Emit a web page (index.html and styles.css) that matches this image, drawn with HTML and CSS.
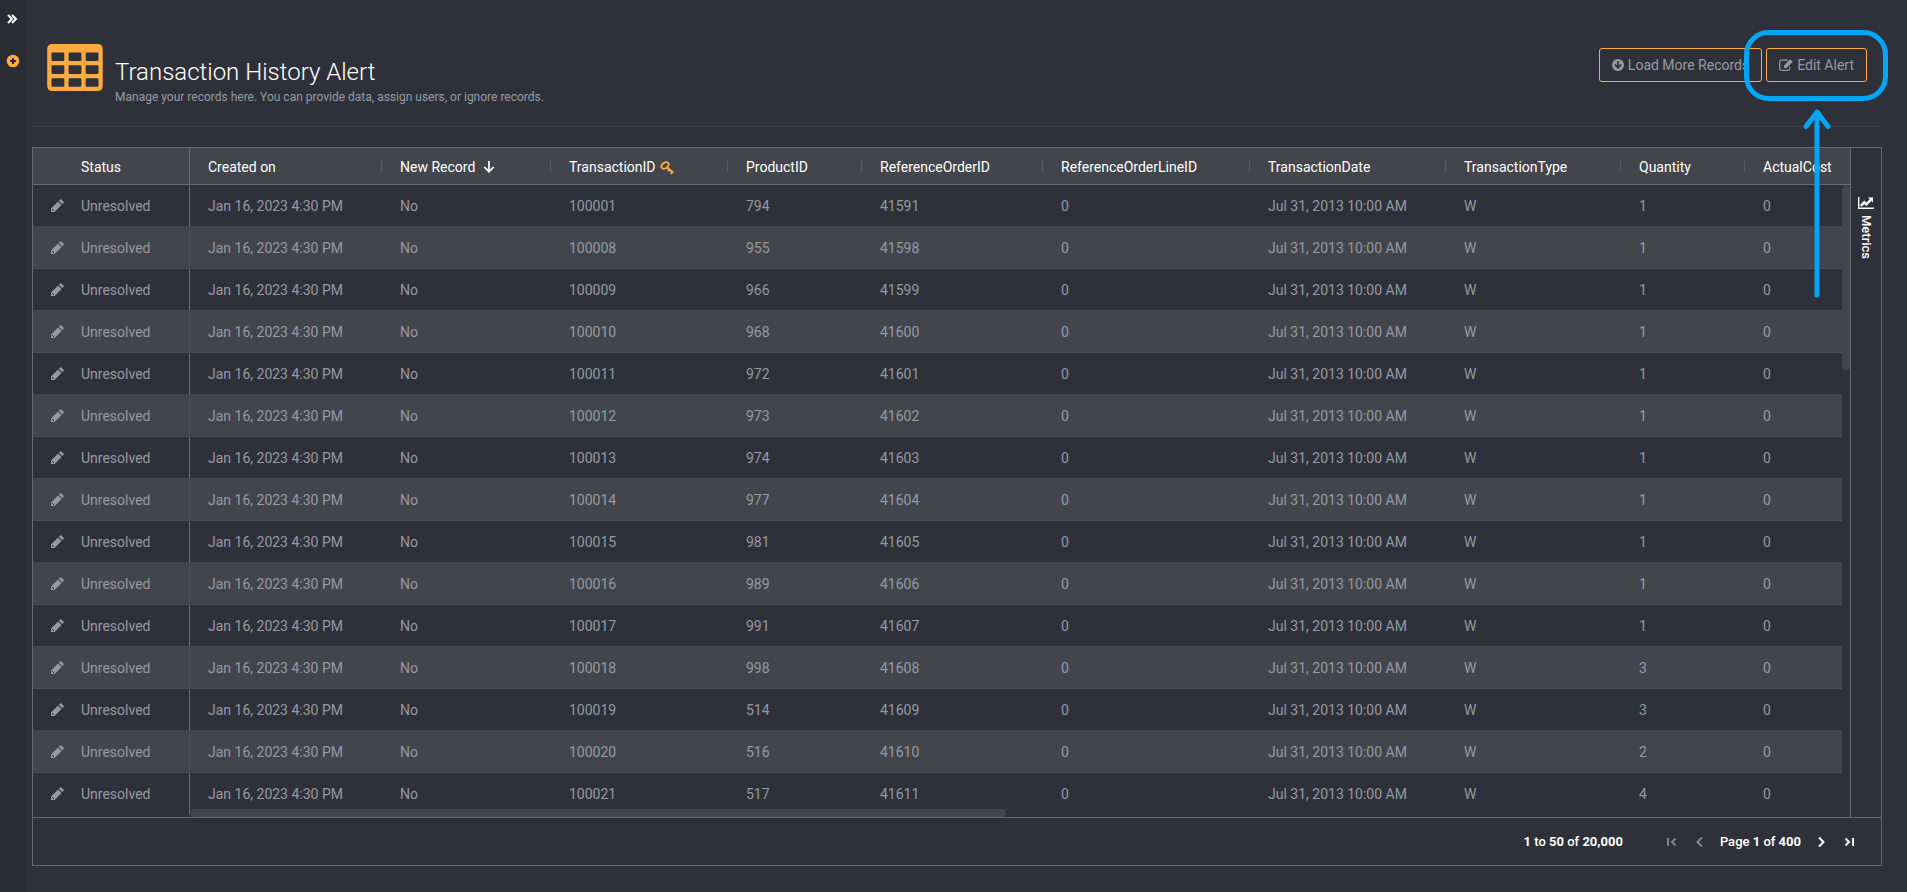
FILE: index.html
```
<!DOCTYPE html>
<html lang="en">
<head>
<meta charset="utf-8">
<title>Transaction History Alert</title>
<link rel="stylesheet" href="styles.css">
</head>
<body>
<div class="app">
  <nav class="sidebar" aria-label="Main">
    <button class="icon-btn" aria-label="Expand menu">
      <svg width="11" height="10" viewBox="0 0 11 10" fill="none" stroke="#fff" stroke-width="2"><path d="M1 1l4 4-4 4M5 1l4 4-4 4"/></svg>
    </button>
    <button class="icon-btn" aria-label="Add">
      <svg width="14" height="14" viewBox="0 0 14 14"><circle cx="7" cy="7" r="6.300" fill="#fbab3f"/><path d="M7 4v6M4 7h6" stroke="#2b2d35" stroke-width="2"/></svg>
    </button>
  </nav>
  <main class="main">
    <header class="page-head">
      <svg class="page-icon" viewBox="0 0 1664 1408" fill="#fbab3f"><path fill-rule="evenodd" d="M160 0H1504Q1664 0 1664 160V1248Q1664 1408 1504 1408H160Q0 1408 0 1248V160Q0 0 160 0ZM160 256Q128 256 128 288V480Q128 512 160 512H480Q512 512 512 480V288Q512 256 480 256ZM672 256Q640 256 640 288V480Q640 512 672 512H992Q1024 512 1024 480V288Q1024 256 992 256ZM1184 256Q1152 256 1152 288V480Q1152 512 1184 512H1504Q1536 512 1536 480V288Q1536 256 1504 256ZM160 640Q128 640 128 672V864Q128 896 160 896H480Q512 896 512 864V672Q512 640 480 640ZM672 640Q640 640 640 672V864Q640 896 672 896H992Q1024 896 1024 864V672Q1024 640 992 640ZM1184 640Q1152 640 1152 672V864Q1152 896 1184 896H1504Q1536 896 1536 864V672Q1536 640 1504 640ZM160 1024Q128 1024 128 1056V1248Q128 1280 160 1280H480Q512 1280 512 1248V1056Q512 1024 480 1024ZM672 1024Q640 1024 640 1056V1248Q640 1280 672 1280H992Q1024 1280 1024 1248V1056Q1024 1024 992 1024ZM1184 1024Q1152 1024 1152 1056V1248Q1152 1280 1184 1280H1504Q1536 1280 1536 1248V1056Q1536 1024 1504 1024Z"/></svg>
      <div class="page-text">
        <h1>Transaction History Alert</h1>
        <p>Manage your records here. You can provide data, assign users, or ignore records.</p>
      </div>
      <div class="actions">
        <button class="btn"><svg width="12" height="12" viewBox="0 0 12 12"><circle cx="6" cy="6" r="6" fill="currentColor"/><path d="M6 2v6.500M2.800 5.500L6 8.700l3.200-3.200" fill="none" stroke="#2f313a" stroke-width="1.700"/></svg>Load More Records</button>
        <button class="btn"><svg width="14" height="12" viewBox="0 0 14 12" fill="none" stroke="currentColor"><path d="M9 1.200H2.500a1.800 1.800 0 0 0-1.800 1.800v6.500a1.800 1.800 0 0 0 1.800 1.800h6.500a1.800 1.800 0 0 0 1.800-1.800V7.500" stroke-width="1.200"/><path d="M11.200.2l2.500 2.500-6.200 6.200H5V6.400z" fill="currentColor" stroke="none"/></svg>Edit Alert</button>
      </div>
      <svg class="callout" width="144" height="273" viewBox="0 0 144 273" fill="none" stroke="#03a5f5" stroke-width="5" stroke-linecap="round" stroke-linejoin="round" aria-hidden="true"><rect x="2.500" y="2.500" width="139" height="66" rx="22"/><path d="M73 265V82M62 96.500L73 82l11 14.500"/></svg>
    </header>
    <section class="grid">
      <div class="grid-body">
        <div class="viewport">
          <table class="records">
            <colgroup><col class="c-status"><col class="c-created"><col class="c-new"><col class="c-tid"><col class="c-pid"><col class="c-rid"><col class="c-line"><col class="c-date"><col class="c-type"><col class="c-qty"><col></colgroup>
            <thead><tr><th>Status</th><th>Created on</th><th>New Record<svg class="sort" width="12" height="12" viewBox="0 0 12 12" fill="none" stroke="#fff" stroke-width="1.700"><path d="M6 0v10.500M1.300 6L6 10.700 10.700 6"/></svg></th><th>TransactionID<svg class="key" width="14" height="14" viewBox="0 0 14 14" fill="none" stroke="#fbab3f" stroke-width="2"><ellipse cx="5" cy="4.500" rx="4" ry="2.800" transform="rotate(-35 5 4.500)"/><path d="M6.800 6.200l6.400 5.600M7.800 10l2.300-2.300M10.800 12.800l2-2.300"/></svg></th><th>ProductID</th><th>ReferenceOrderID</th><th>ReferenceOrderLineID</th><th>TransactionDate</th><th>TransactionType</th><th>Quantity</th><th>ActualCost</th></tr></thead>
            <tbody id="rows"></tbody>
          </table>
          <div class="v-track"><div class="v-head"></div><div class="v-thumb"></div></div>
          <div class="h-track"><div class="h-thumb"></div></div>
        </div>
        <aside class="side">
          <button class="side-tab"><svg width="16" height="12" viewBox="0 0 16 12" fill="none" stroke="#fff"><path d="M.700 0v11.300H16" stroke-width="1.400"/><path d="M2.800 8.800L6.300 5.300l2 2 4.500-4.500" stroke-width="2.400"/><path d="M10 .5h5v5z" fill="#fff" stroke="none"/></svg><span>Metrics</span></button>
        </aside>
      </div>
      <footer class="pager">
        <span class="summary"><b>1</b> to <b>50</b> of <b>20,000</b></span>
        <button class="pg off" aria-label="First page" disabled><svg width="10" height="8" viewBox="0 0 10 8"><path d="M1 0v8M8.500.500L5 4l3.500 3.500"/></svg></button>
        <button class="pg off" aria-label="Previous page" disabled><svg width="10" height="10" viewBox="0 0 10 10"><path d="M7 .5L2.500 5 7 9.500"/></svg></button>
        <span class="page-no">Page <b>1</b> of <b>400</b></span>
        <button class="pg" aria-label="Next page"><svg width="10" height="10" viewBox="0 0 10 10"><path d="M3 .5L7.500 5 3 9.500"/></svg></button>
        <button class="pg" aria-label="Last page"><svg width="10" height="8" viewBox="0 0 10 8"><path d="M9 0v8M1.500.500L5 4 1.500 7.500"/></svg></button>
      </footer>
    </section>
  </main>
</div>
<script src="rows.js"></script>
</body>
</html>
```
FILE: styles.css
```
* { box-sizing: border-box; }
body {
  margin: 0;
  background: #2f313a;
  color: #959aa2;
  font: 14px/18px Roboto, "Liberation Sans", sans-serif;
}
button {
  font: inherit;
  color: inherit;
  background: none;
  border: 0;
  padding: 0;
  cursor: pointer;
}
svg { flex: none; }
.app { display: flex; min-height: 100vh; }
.sidebar {
  width: 27px;
  flex: none;
  background: #2b2d35;
  display: flex;
  flex-direction: column;
  align-items: center;
  gap: 28px;
  padding: 12px 2px 0 0;
}
.icon-btn { display: flex; height: 14px; align-items: center; }
.main {
  flex: 1;
  min-width: 0;
  display: flex;
  flex-direction: column;
  padding: 0 25px 26px 5px;
}
.page-head {
  position: relative;
  display: flex;
  align-items: flex-start;
  height: 127px;
  padding: 44px 15px 0;
  border-bottom: 1px solid #3b3c4a;
  margin-bottom: 20px;
}
.page-icon { width: 56px; height: 47px; }
.page-text { flex: 1; margin-left: 12px; padding-top: 12px; }
h1 {
  margin: 0;
  font-size: 24px;
  line-height: 32px;
  font-weight: 300;
  color: #fff;
}
.page-text p { margin: 0; font-size: 12px; line-height: 18px; }
.actions { display: flex; gap: 4px; padding-top: 4px; }
.btn {
  display: flex;
  align-items: center;
  gap: 4px;
  height: 34px;
  padding: 0 12px;
  border: 1px solid #fbab3f;
  border-radius: 3px;
}
.callout { position: absolute; right: -6px; top: 30px; z-index: 3; pointer-events: none; }

.grid {
  flex: 1;
  display: flex;
  flex-direction: column;
  border: 1px solid #686a71;
}
.grid-body { flex: 1; display: flex; }
.viewport {
  position: relative;
  flex: 1;
  min-width: 0;
  display: flex;
  align-items: flex-start;
  overflow: hidden;
}
.records { flex: 1; min-width: 0; border-collapse: separate; border-spacing: 0; table-layout: fixed; }
.c-status { width: 157px; }
.c-created { width: 192px; }
.c-new { width: 169px; }
.c-tid { width: 177px; }
.c-pid { width: 134px; }
.c-rid { width: 181px; }
.c-line { width: 207px; }
.c-date { width: 196px; }
.c-type { width: 175px; }
.c-qty { width: 124px; }
th, td { text-align: left; padding: 0 0 0 18px; white-space: nowrap; font-weight: 400; }
th {
  height: 37px;
  padding-top: 2px;
  color: #fff;
  background: #43454d linear-gradient(#55575f, #55575f) no-repeat right 0 center / 1px 12px;
  border-bottom: 1px solid #686a71;
}
th:first-child, th:last-child { background-image: none; }
th:first-child { padding-left: 48px; }
.sort { margin-left: 8px; vertical-align: -1px; }
.key { margin-left: 4px; vertical-align: -3px; }
td { height: 42px; border-bottom: 1px solid #46464c; }
tr:nth-child(even) td { background: #43454d; border-color: #4d4c50; }
tbody tr:last-child td { border-bottom-color: transparent; }
th:first-child, td:first-child { border-right: 1px solid #686a71; }
.status { display: flex; align-items: center; gap: 16px; }
.v-track { width: 8px; flex: none; }
.v-head { height: 37px; background: #43454d; border-bottom: 1px solid #686a71; }
.v-thumb { height: 185px; background: #43454d; border-radius: 4px; }
.h-track { position: absolute; left: 157px; right: 8px; bottom: 0; height: 8px; }
.h-thumb { width: 49.4%; height: 8px; background: #43454d; border-radius: 4px; }
.side { width: 31px; flex: none; border-left: 1px solid #686a71; padding-top: 49px; }
.side-tab {
  width: 100%;
  display: flex;
  flex-direction: column;
  align-items: center;
  gap: 6px;
  color: #fff;
  font-size: 13px;
  font-weight: 500;
}
.side-tab span { writing-mode: vertical-rl; }
.pager {
  height: 48px;
  border-top: 1px solid #686a71;
  display: flex;
  align-items: center;
  justify-content: flex-end;
  padding-right: 27px;
  color: #fff;
  font-size: 13px;
  font-weight: 500;
}
.pager b { font-weight: 700; }
.summary { margin-right: 44px; }
.page-no { margin: 0 15px; }
.pg { display: flex; }
.pg svg { fill: none; stroke: currentColor; stroke-width: 2; }
.pg.off { color: #83858b; }
.pg + .pg { margin-left: 18px; }
```
FILE: rows.js
```
const records = [
  [100001, 794, 41591, 1], [100008, 955, 41598, 1], [100009, 966, 41599, 1],
  [100010, 968, 41600, 1], [100011, 972, 41601, 1], [100012, 973, 41602, 1],
  [100013, 974, 41603, 1], [100014, 977, 41604, 1], [100015, 981, 41605, 1],
  [100016, 989, 41606, 1], [100017, 991, 41607, 1], [100018, 998, 41608, 3],
  [100019, 514, 41609, 3], [100020, 516, 41610, 2], [100021, 517, 41611, 4]
];
const pencil = '<svg width="14" height="14" viewBox="1 0 14 14" fill="currentColor"><path d="M1 9.500L8 2.500l3.500 3.500-7 7H1zM8.800 1.700l1.200-1.200q.700-.600 1.400 0l2.100 2.100q.600.700 0 1.400l-1.200 1.200z"/><path d="M2 10l2 2" stroke="#2f313a"/></svg>';
document.getElementById('rows').innerHTML = records.map(([id, product, order, qty]) => {
  const cells = ['Jan 16, 2023 4:30 PM', 'No', id, product, order, 0, 'Jul 31, 2013 10:00 AM', 'W', qty, 0];
  return `<tr><td><div class="status">${pencil}Unresolved</div></td>${cells.map(c => `<td>${c}</td>`).join('')}</tr>`;
}).join('');
```
